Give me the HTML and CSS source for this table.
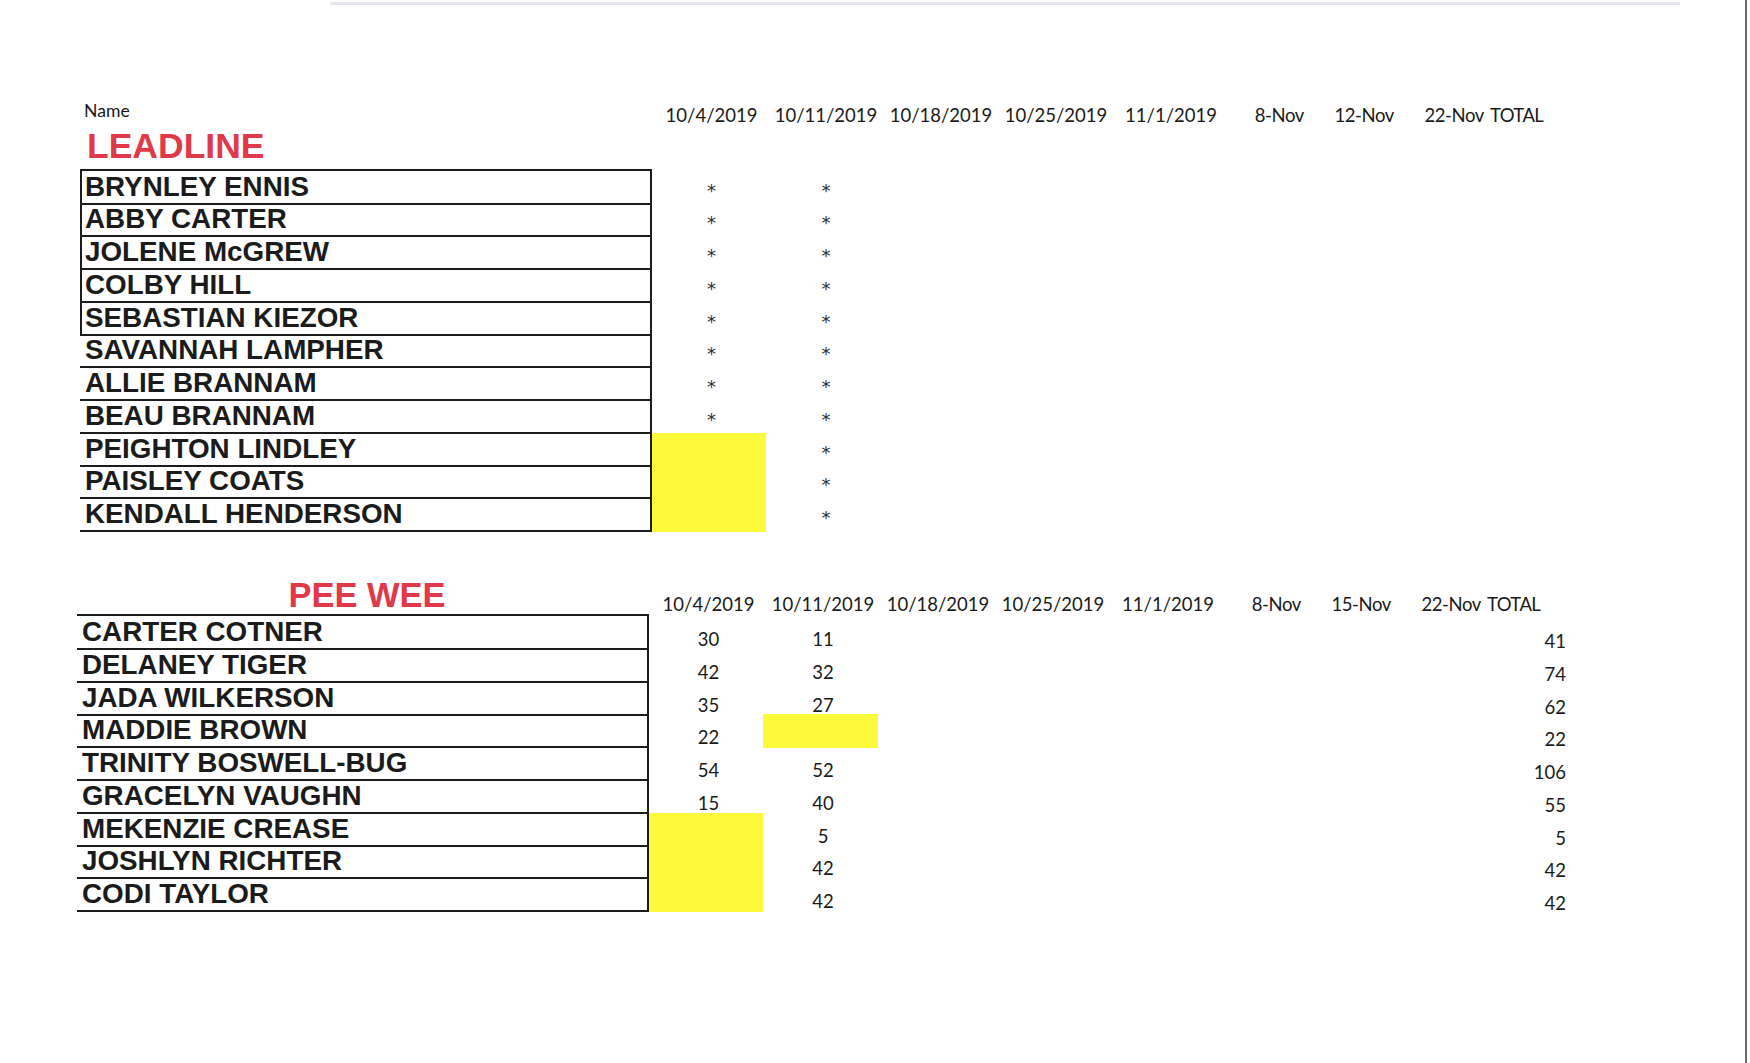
FILE: index.html
```html
<!DOCTYPE html>
<html lang="en">
<head>
<meta charset="utf-8">
<title>Leadline / Pee Wee points</title>
<link rel="stylesheet" href="styles.css">
</head>
<body>
<div class="page">
  <div class="scan-top"></div>

  <section class="block leadline">
    <div class="row head">
      <div class="name-h">Name</div>
      <div class="d">10/4/2019</div>
      <div class="d">10/11/2019</div>
      <div class="d">10/18/2019</div>
      <div class="d">10/25/2019</div>
      <div class="d">11/1/2019</div>
      <div class="d r">8-Nov</div>
      <div class="d r">12-Nov</div>
      <div class="d r">22-Nov</div>
      <div class="d tot">TOTAL</div>
    </div>
    <div class="title">LEADLINE</div>
    <div class="rule"></div>
    <div class="row item boxed"><div class="nm">BRYNLEY ENNIS</div><div class="v a">*</div><div class="v a">*</div></div>
    <div class="row item boxed"><div class="nm">ABBY CARTER</div><div class="v a">*</div><div class="v a">*</div></div>
    <div class="row item boxed"><div class="nm">JOLENE McGREW</div><div class="v a">*</div><div class="v a">*</div></div>
    <div class="row item boxed"><div class="nm">COLBY HILL</div><div class="v a">*</div><div class="v a">*</div></div>
    <div class="row item boxed"><div class="nm">SEBASTIAN KIEZOR</div><div class="v a">*</div><div class="v a">*</div></div>
    <div class="row item"><div class="nm">SAVANNAH LAMPHER</div><div class="v a">*</div><div class="v a">*</div></div>
    <div class="row item"><div class="nm">ALLIE BRANNAM</div><div class="v a">*</div><div class="v a">*</div></div>
    <div class="row item"><div class="nm">BEAU BRANNAM</div><div class="v a">*</div><div class="v a">*</div></div>
    <div class="row item"><div class="nm">PEIGHTON LINDLEY</div><div class="v hl"></div><div class="v a">*</div></div>
    <div class="row item"><div class="nm">PAISLEY COATS</div><div class="v hl"></div><div class="v a">*</div></div>
    <div class="row item"><div class="nm">KENDALL HENDERSON</div><div class="v hl"></div><div class="v a">*</div></div>
  </section>

  <section class="block peewee">
    <div class="row head2">
      <div class="title2">PEE WEE</div>
      <div class="d">10/4/2019</div>
      <div class="d">10/11/2019</div>
      <div class="d">10/18/2019</div>
      <div class="d">10/25/2019</div>
      <div class="d">11/1/2019</div>
      <div class="d r">8-Nov</div>
      <div class="d r">15-Nov</div>
      <div class="d r">22-Nov</div>
      <div class="d tot">TOTAL</div>
    </div>
    <div class="rule"></div>
    <div class="row item"><div class="nm">CARTER COTNER</div><div class="v">30</div><div class="v">11</div><div class="v t">41</div></div>
    <div class="row item"><div class="nm">DELANEY TIGER</div><div class="v">42</div><div class="v">32</div><div class="v t">74</div></div>
    <div class="row item"><div class="nm">JADA WILKERSON</div><div class="v">35</div><div class="v">27</div><div class="v t">62</div></div>
    <div class="row item"><div class="nm">MADDIE BROWN</div><div class="v">22</div><div class="v hl"></div><div class="v t">22</div></div>
    <div class="row item"><div class="nm">TRINITY BOSWELL-BUG</div><div class="v">54</div><div class="v">52</div><div class="v t">106</div></div>
    <div class="row item"><div class="nm">GRACELYN VAUGHN</div><div class="v">15</div><div class="v">40</div><div class="v t">55</div></div>
    <div class="row item"><div class="nm">MEKENZIE CREASE</div><div class="v hl"></div><div class="v">5</div><div class="v t">5</div></div>
    <div class="row item"><div class="nm">JOSHLYN RICHTER</div><div class="v hl"></div><div class="v">42</div><div class="v t">42</div></div>
    <div class="row item"><div class="nm">CODI TAYLOR</div><div class="v hl"></div><div class="v">42</div><div class="v t">42</div></div>
  </section>
</div>
</body>
</html>
```

FILE: styles.css
```css
html, body {
  margin: 0;
  padding: 0;
  background: #ffffff;
}

.page {
  width: 1745px;
  height: 1063px;
  border-right: 2px solid #6a6a6a;
  overflow: hidden;
  font-family: Lato, "Open Sans", sans-serif;
  color: #1a1a1a;
}

.scan-top {
  margin: 2px 0 0 330px;
  width: 1350px;
  height: 3px;
  background: #e3e7ec;
}

.block {
  margin-left: 80px;
}

.leadline {
  margin-top: 95px;
}

.peewee {
  margin-top: 46px;
  margin-left: 77px;
}

.row {
  display: grid;
  grid-template-columns: 572px 114px 115px 115px 115px 115px 78px 90px 90px 86px;
}

/* header rows */
.head {
  height: 28px;
  align-items: start;
}

.name-h {
  font-size: 17.6px;
  line-height: 22px;
  padding-left: 4px;
}

.d {
  font-size: 18.5px;
  line-height: 22px;
  padding-top: 3.5px;
  padding-left: 5px;
  text-align: center;
  white-space: nowrap;
}

.d.r {
  text-align: right;
  padding-left: 0;
  letter-spacing: -0.4px;
}

.d.tot {
  text-align: left;
  padding-left: 6px;
  letter-spacing: -0.6px;
}

.title {
  font-family: "Liberation Sans", Arial, sans-serif;
  font-weight: bold;
  font-size: 35.5px;
  line-height: 36px;
  color: #e0394a;
  padding-left: 7px;
  margin-bottom: 4.6px;
}

.head2 {
  height: 37px;
}

.head2 .d {
  align-self: end;
  line-height: 20px;
  padding-top: 0;
}

.title2 {
  font-family: "Liberation Sans", Arial, sans-serif;
  font-weight: bold;
  font-size: 34.5px;
  line-height: 36px;
  color: #e0394a;
  text-align: center;
  padding-left: 8px;
  align-self: start;
}

.rule {
  width: 572px;
  height: 2px;
  background: #1c1c1c;
}

/* body rows */
.item {
  height: 32.77px;
}

.nm {
  box-sizing: border-box;
  border-right: 2px solid #1c1c1c;
  border-bottom: 2px solid #1c1c1c;
  display: flex;
  align-items: center;
  padding-left: 5px;
  font-family: "Liberation Sans", Arial, sans-serif;
  font-weight: bold;
  font-size: 27.8px;
  color: #1b1b1b;
  white-space: nowrap;
}

.boxed .nm {
  border-left: 2px solid #1c1c1c;
  padding-left: 3px;
}

.v {
  display: flex;
  align-items: flex-end;
  justify-content: center;
  padding-left: 5px;
  font-size: 18.5px;
  line-height: 22px;
  color: #1a1a1a;
}

.v.a {
  font-family: "DejaVu Sans", sans-serif;
  font-size: 18px;
  line-height: 28px;
  color: #2e2e2e;
}

.v.hl {
  background: #fcfa3a;
}

.v.t {
  grid-column: 10;
  justify-content: flex-end;
  padding-left: 0;
  padding-right: 1px;
  padding-bottom: 0;
  margin-bottom: -2px;
}
```
